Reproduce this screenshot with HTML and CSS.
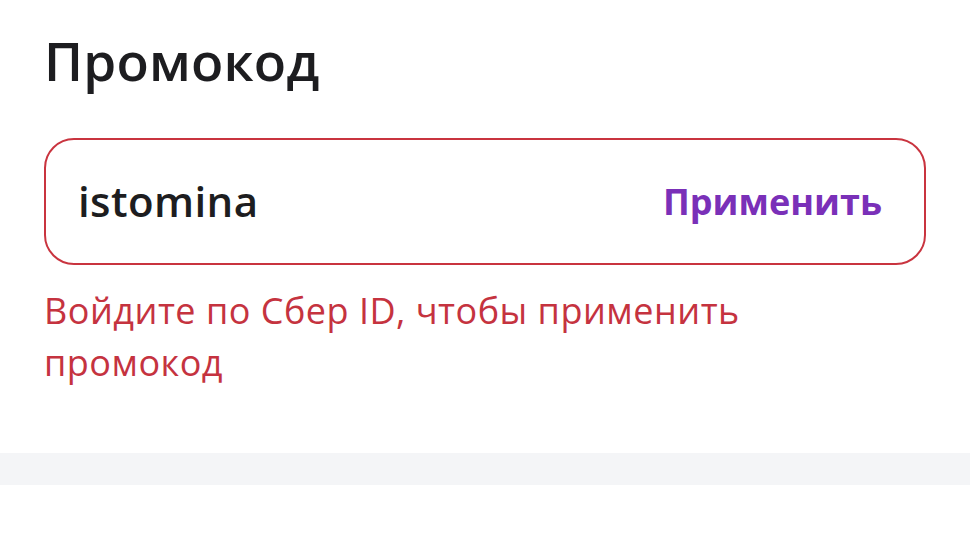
FILE: index.html
```html
<!DOCTYPE html>
<html lang="ru">
<head>
<meta charset="utf-8">
<link rel="stylesheet" href="styles.css">
</head>
<body>
<section class="promo">
  <h1 class="promo-title">Промокод</h1>
  <div class="promo-field">
    <span class="promo-value">istomina</span>
    <span class="promo-apply">Применить</span>
  </div>
  <p class="promo-error">Войдите по Сбер ID, чтобы применить промокод</p>
</section>
<div class="divider"></div>
</body>
</html>
```
FILE: styles.css
```css
html, body {
  margin: 0;
  padding: 0;
  background: #ffffff;
}
body {
  width: 970px;
  height: 545px;
  overflow: hidden;
  font-family: "Open Sans", "Noto Sans", sans-serif;
}
.promo {
  padding: 24px 44px 0 44px;
  display: flex;
  flex-direction: column;
}
.promo-title {
  margin: 0;
  font-size: 53px;
  font-weight: 600;
  line-height: 74px;
  color: #1d1d20;
  letter-spacing: 0.2px;
}
.promo-field {
  margin-top: 40px;
  height: 127px;
  box-sizing: border-box;
  border: 2px solid #c9343f;
  border-radius: 30px;
  display: flex;
  align-items: center;
  justify-content: space-between;
  padding: 0 42px 0 32px;
}
.promo-value {
  font-size: 42px;
  font-weight: 600;
  color: #1d1d20;
  letter-spacing: 0.4px;
  margin-top: -2px;
}
.promo-apply {
  font-size: 36px;
  font-weight: 700;
  color: #7a30b8;
}
.promo-error {
  margin: 20px 0 0 0;
  font-size: 36px;
  line-height: 52px;
  color: #c5333f;
  letter-spacing: 0.5px;
  width: 740px;
}
.divider {
  margin-top: 64px;
  height: 32px;
  background: #f4f5f7;
}
```
